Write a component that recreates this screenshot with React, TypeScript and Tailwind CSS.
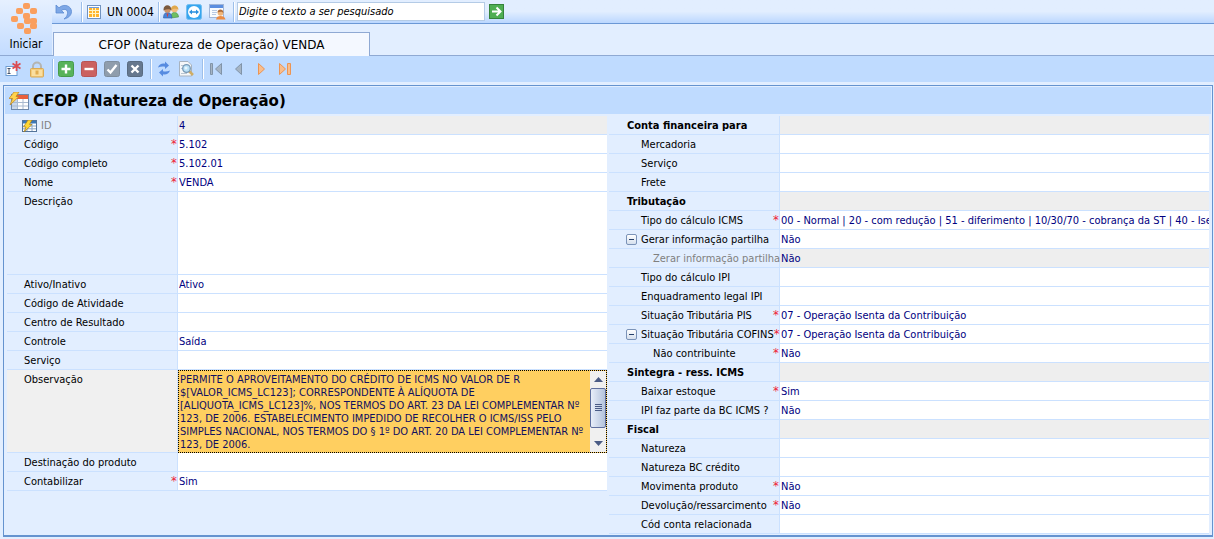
import React, { useState } from 'react'

interface Field {
  id: string
  label: string
  value?: string
  required?: boolean
  disabled?: boolean
  collapsible?: boolean
  level?: number
  kind?: 'section' | 'text' | 'memo' | 'note' | 'key'
}

const LEFT_FIELDS: Field[] = [
  { id: 'id', label: 'ID', value: '4', kind: 'key', disabled: true },
  { id: 'codigo', label: 'Código', value: '5.102', required: true },
  { id: 'codigo-completo', label: 'Código completo', value: '5.102.01', required: true },
  { id: 'nome', label: 'Nome', value: 'VENDA', required: true },
  { id: 'descricao', label: 'Descrição', kind: 'memo' },
  { id: 'ativo', label: 'Ativo/Inativo', value: 'Ativo' },
  { id: 'atividade', label: 'Código de Atividade' },
  { id: 'centro', label: 'Centro de Resultado' },
  { id: 'controle', label: 'Controle', value: 'Saída' },
  { id: 'servico', label: 'Serviço' },
  {
    id: 'observacao',
    label: 'Observação',
    kind: 'note',
    value: [
      'PERMITE O APROVEITAMENTO DO CRÉDITO DE ICMS NO VALOR DE R',
      '$[VALOR_ICMS_LC123]; CORRESPONDENTE À ALÍQUOTA DE',
      '[ALIQUOTA_ICMS_LC123]%, NOS TERMOS DO ART. 23 DA LEI COMPLEMENTAR Nº',
      '123, DE 2006. ESTABELECIMENTO IMPEDIDO DE RECOLHER O ICMS/ISS PELO',
      'SIMPLES NACIONAL, NOS TERMOS DO § 1º DO ART. 20 DA LEI COMPLEMENTAR Nº',
      '123, DE 2006.',
    ].join('\n'),
  },
  { id: 'destinacao', label: 'Destinação do produto' },
  { id: 'contabilizar', label: 'Contabilizar', value: 'Sim', required: true },
]

const RIGHT_FIELDS: Field[] = [
  { id: 'conta', label: 'Conta financeira para', kind: 'section' },
  { id: 'conta-mercadoria', label: 'Mercadoria' },
  { id: 'conta-servico', label: 'Serviço' },
  { id: 'conta-frete', label: 'Frete' },
  { id: 'tributacao', label: 'Tributação', kind: 'section' },
  {
    id: 'calculo-icms',
    label: 'Tipo do cálculo ICMS',
    value: '00 - Normal | 20 - com redução | 51 - diferimento | 10/30/70 - cobrança da ST | 40 - Isen',
    required: true,
  },
  { id: 'gerar-partilha', label: 'Gerar informação partilha', value: 'Não', collapsible: true },
  { id: 'zerar-partilha', label: 'Zerar informação partilha', value: 'Não', disabled: true, level: 2 },
  { id: 'calculo-ipi', label: 'Tipo do cálculo IPI' },
  { id: 'enquadramento-ipi', label: 'Enquadramento legal IPI' },
  { id: 'st-pis', label: 'Situação Tributária PIS', value: '07 - Operação Isenta da Contribuição', required: true },
  {
    id: 'st-cofins',
    label: 'Situação Tributária COFINS',
    value: '07 - Operação Isenta da Contribuição',
    required: true,
    collapsible: true,
  },
  { id: 'nao-contribuinte', label: 'Não contribuinte', value: 'Não', required: true, level: 2 },
  { id: 'sintegra', label: 'Sintegra - ress. ICMS', kind: 'section' },
  { id: 'baixar-estoque', label: 'Baixar estoque', value: 'Sim', required: true },
  { id: 'ipi-bc', label: 'IPI faz parte da BC ICMS ?', value: 'Não' },
  { id: 'fiscal', label: 'Fiscal', kind: 'section' },
  { id: 'natureza', label: 'Natureza' },
  { id: 'natureza-bc', label: 'Natureza BC crédito' },
  { id: 'movimenta', label: 'Movimenta produto', value: 'Não', required: true },
  { id: 'devolucao', label: 'Devolução/ressarcimento', value: 'Não', required: true },
  { id: 'conta-relacionada', label: 'Cód conta relacionada' },
]

/* ---------- icons ---------- */

function Logo() {
  const dots = [[18, 6], [11, 11], [25, 11], [18, 16], [6, 19], [25, 21], [12, 26], [19, 21], [25, 26], [19, 31]]
  return (
    <svg width="36" height="36" viewBox="0 0 36 36" aria-hidden="true">
      {dots.map(([x, y]) => (
        <rect key={`${x}-${y}`} x={x - 3} y={y - 3} width="7" height="6" rx="2" fill="#fa9f5e" />
      ))}
    </svg>
  )
}

function UndoIcon() {
  return (
    <svg width="18" height="18" viewBox="0 0 18 18" aria-hidden="true">
      <path d="M1 2v8h8L6.500 7.500C10 5 13 7 12.500 10.500c-.3 2.500-1.500 4-3.500 5.500 4-.8 7.500-3.500 7.500-7.500C16.500 3 9 0 4 4.800z" fill="#7da7e6" stroke="#5c8ad2" strokeWidth=".8" />
    </svg>
  )
}

function GridIcon() {
  return (
    <svg width="14" height="14" viewBox="0 0 14 14" aria-hidden="true">
      <rect x=".5" y=".5" width="13" height="13" fill="#fff" stroke="#7193c0" />
      <rect x="2" y="2" width="10" height="10" fill="#ffb52e" />
      <path d="M2 5.500h10M2 8.500h10M5.500 2v10M8.500 2v10" stroke="#fff4c8" />
      <path d="M2 2.500h10" stroke="#6d9be0" />
    </svg>
  )
}

function UsersIcon() {
  return (
    <svg width="16" height="16" viewBox="0 0 16 16" aria-hidden="true">
      <path d="M8 14c0-4 1-5.500 3.500-5.500s4 2 4 4.500z" fill="#6fbf62" stroke="#438c42" strokeWidth=".6" />
      <circle cx="11.500" cy="5" r="3.300" fill="#f3bd7c" />
      <path d="M8 6c0-6 7.500-6 7.500 0-2-2-5-1-7.500 0z" fill="#e0a94e" />
      <path d="M.5 14c0-4 1.500-5.500 4-5.500s4.500 2 4.500 5.500z" fill="#4684d8" stroke="#2e5da8" strokeWidth=".6" />
      <circle cx="4.500" cy="5.500" r="3.300" fill="#cf9467" />
      <path d="M.5 6.500c-.5-7 8-7 8 0-2-2-5-1.500-8 0z" fill="#79593f" />
      <path d="m3.500 9.500 1 4 1-4z" fill="#d93c35" />
    </svg>
  )
}

function RemoteIcon() {
  return (
    <svg width="16" height="16" viewBox="0 0 16 16" aria-hidden="true">
      <rect x=".5" y=".5" width="15" height="15" rx="2" fill="#37a6ef" stroke="#73bdf0" />
      <circle cx="8" cy="8" r="6" fill="#fff" />
      <path d="m3 8 3-2.500v1.700h4V5.500L13 8l-3 2.500V8.800H6v1.700z" fill="#2b91df" />
    </svg>
  )
}

function AgendaIcon() {
  return (
    <svg width="17" height="16" viewBox="0 0 17 16" aria-hidden="true">
      <rect x=".5" y=".5" width="14" height="13" fill="#f8fbff" stroke="#a1b6d8" />
      <path d="M1 1h13v3H1z" fill="#5b8ee0" />
      <path d="M3 6.500h5M3 8.500h5M3 10.500h4" stroke="#b7c9e4" />
      <circle cx="11.500" cy="9" r="2.800" fill="#f0b57a" />
      <path d="M8.500 8.500c0-4 6-4 6 .5-2-1.500-3-1.500-6-.5z" fill="#b06c38" />
      <path d="M7 15.500c.5-2.500 2-3.500 4.500-3.500s4.500 1 5 3.500z" fill="#eb8b44" />
    </svg>
  )
}

function GoIcon() {
  return (
    <svg width="15" height="15" viewBox="0 0 15 15" aria-hidden="true">
      <rect x=".5" y=".5" width="14" height="14" fill="#4fae52" stroke="#35833b" />
      <path d="M3 7.500h8M7.500 3.500l4 4-4 4" fill="none" stroke="#fff" strokeWidth="2" />
    </svg>
  )
}

function NewIcon() {
  return (
    <svg width="17" height="16" viewBox="0 0 17 16" aria-hidden="true">
      <rect x="1" y="5.500" width="11" height="9" fill="#fff" stroke="#6e9ed3" />
      <path d="M2.500 7.500h3M2.500 12.500h3M4 7.500v5" stroke="#45536b" />
      <path d="M11.500 0v10M7.500 2.500l8 5M15.500 2.500l-8 5" stroke="#dc4b51" strokeWidth="1.700" />
    </svg>
  )
}

function LockIcon() {
  return (
    <svg width="16" height="17" viewBox="0 0 16 17" aria-hidden="true">
      <path d="M4 9V5.500a4 4 0 0 1 8 0V9" fill="none" stroke="#b4b5b2" strokeWidth="2" />
      <rect x="1.500" y="7.500" width="13" height="8.500" rx="1" fill="#f5cd7e" stroke="#d9aa55" />
      <path d="M3 10h10M3 12h10M3 14h10" stroke="#fff0c2" />
      <rect x="6.500" y="9.500" width="3" height="4" fill="#e1ad52" />
    </svg>
  )
}

function BoxIcon({ fill, edge, d }: { fill: string; edge: string; d: string }) {
  return (
    <svg width="16" height="16" viewBox="0 0 16 16" aria-hidden="true">
      <rect x=".5" y=".5" width="15" height="15" rx="2" fill={fill} stroke={edge} />
      <path d={d} fill="none" stroke="#fff" strokeWidth="2.400" />
    </svg>
  )
}

function RefreshIcon() {
  return (
    <svg width="14" height="16" viewBox="0 0 14 16" aria-hidden="true">
      <path d="M1 6.500c1-3 4-4.500 7-3.700V.5L12 4.500 8 8V5.700c-2.500-.6-4.500-.2-7 .8z" fill="#568be0" />
      <path d="M13 9.500c-1 3-4 4.500-7 3.700v2.300l-4-4L6 8v2.300c2.500.6 4.500.2 7-.8z" fill="#568be0" />
    </svg>
  )
}

function PreviewIcon() {
  return (
    <svg width="17" height="16" viewBox="0 0 17 16" aria-hidden="true">
      <path d="M1.500.5H10l3.500 3.500v11h-12z" fill="#f5f7f9" stroke="#a8b3bf" />
      <path d="M3 4.500h4M3 7.500h2M3 12.500h6" stroke="#bac6d2" />
      <path d="m11 10 4 4" stroke="#cfad65" strokeWidth="2.500" />
      <circle cx="8.500" cy="7.500" r="3.800" fill="#b9e1f7" stroke="#7798b5" strokeWidth="1.300" />
      <circle cx="8" cy="7" r="1.500" fill="#e8f7ff" />
    </svg>
  )
}

const NAV_SHAPES = {
  first: 'M1.500 1.500h2v11h-2zM12.500 1.500v11l-6-5.500z',
  prev: 'M9.500 1.500v11L3.500 7z',
  next: 'M3.500 1.500v11l6-5.500z',
  last: 'M1.500 1.500v11l6-5.500zM9.500 1.500h3v11h-3z',
}

function NavIcon({ kind }: { kind: keyof typeof NAV_SHAPES }) {
  const back = kind === 'first' || kind === 'prev'
  return (
    <svg width="14" height="14" viewBox="0 0 14 14" aria-hidden="true">
      <path d={NAV_SHAPES[kind]} fill={back ? '#a5b4c4' : '#f8bd8c'} stroke={back ? '#8194a9' : '#ec9453'} />
    </svg>
  )
}

function TableIcon() {
  return (
    <svg width="20" height="18" viewBox="0 0 20 18" aria-hidden="true">
      <rect x="2.500" y="2.500" width="17" height="15" fill="#fff" stroke="#6f89ab" />
      <path d="M3 3h16v4H3z" fill="#e9603c" />
      <path d="M3 7h5v10H3z" fill="#c9d8eb" />
      <path d="M3 10.500h16M3 14h16M8.500 7v10M14 7v10" stroke="#a9bad0" />
      <path d="M5 0h5L7 4.500h3L1 13l2.500-6.500H0z" fill="#ffd34d" stroke="#bb8320" strokeWidth=".7" />
    </svg>
  )
}

function KeyIcon() {
  return (
    <svg width="15" height="12" viewBox="0 0 15 12" aria-hidden="true">
      <rect x=".5" y=".5" width="14" height="11" fill="#fff" stroke="#54749a" />
      <path d="M1 1h13v2.500H1z" fill="#3b78b8" />
      <path d="M1 6h13M1 8.800h13M5 3v8M10 3v8" stroke="#8aa6c6" />
      <path d="M6 0h4L7.500 4.500H10L2 12l2-5H1.500z" fill="#ffd733" stroke="#a37a1c" strokeWidth=".7" />
    </svg>
  )
}

/* ---------- building blocks ---------- */

function Separator({ className = '' }: { className?: string }) {
  return <span className={`h-5 w-0.5 shrink-0 border-l border-[#9dbfea] bg-white ${className}`} />
}

function ToolButton({ title, children }: { title: string; children: React.ReactNode }) {
  return (
    <button type="button" title={title} aria-label={title} className="flex h-[23px] w-[23px] shrink-0 items-center justify-center">
      {children}
    </button>
  )
}

function Scroller() {
  return (
    <div className="flex w-4 shrink-0 flex-col items-center justify-between bg-[#f0f0f0] py-0.5" aria-hidden="true">
      <svg width="9" height="13" viewBox="0 0 9 13"><path d="M0 9h9L4.500 4z" fill="#4a5b85" /></svg>
      <div className="mb-2 flex h-10 w-4 items-center justify-center rounded-xs border border-[#5f6f9e] bg-gradient-to-r from-[#e8eef9] to-[#b4c3dc]">
        <svg width="7" height="8" viewBox="0 0 7 8"><path d="M0 .5h7M0 2.500h7M0 4.500h7M0 6.500h7" stroke="#4a5b85" /></svg>
      </div>
      <svg width="9" height="13" viewBox="0 0 9 13"><path d="M0 4h9L4.500 9z" fill="#4a5b85" /></svg>
    </div>
  )
}

function getIndent({ kind, level, collapsible }: Field, side: 'left' | 'right') {
  if (side === 'left') return kind === 'key' ? 'pl-[15px]' : 'pl-[17px]'
  if (kind === 'section') return 'pl-[18px]'
  if (level === 2) return 'pl-11'
  return collapsible ? 'pl-[17px]' : 'pl-8'
}

function FieldRow({ field, side }: { field: Field; side: 'left' | 'right' }) {
  const [value, setValue] = useState(field.value ?? '')
  const { id, kind = 'text', label, required, disabled, collapsible } = field
  const tall = kind === 'memo' || kind === 'note'

  return (
    <div className={`flex ${tall ? 'h-[83px]' : 'h-[19px]'}`}>
      <div
        className={`flex w-[171px] shrink-0 items-start border-r border-b border-[#cbe1ff] ${getIndent(field, side)} ${kind === 'note' ? 'bg-[#f0f0f0]' : 'bg-[#e2eeff]'}`}
      >
        {kind === 'key' && <span className="mt-1 mr-1"><KeyIcon /></span>}
        {collapsible && (
          <button type="button" aria-label={`Recolher ${label}`} className="mt-1 mr-1 flex h-[11px] w-[11px] shrink-0 items-center justify-center rounded-xs border border-[#7b93b8] bg-gradient-to-b from-white to-[#d5dfed]">
            <span className="h-px w-[5px] bg-[#26406b]" />
          </button>
        )}
        {kind === 'section' ? (
          <h2 className="leading-5 font-bold whitespace-nowrap">{label}</h2>
        ) : (
          <label htmlFor={id} className={`flex-1 leading-5 whitespace-nowrap ${disabled ? 'text-[#808080]' : ''}`}>
            {label}
          </label>
        )}
        {required && <span className="w-1.5 shrink-0 text-[13px] leading-[18px] text-[#ee1c35]">*</span>}
      </div>

      {kind === 'section' && <div className="flex-1 border-b border-[#cbe1ff] bg-[#eee]" />}
      {kind === 'memo' && (
        <textarea id={id} value={value} onChange={e => setValue(e.target.value)} className="min-w-0 flex-1 resize-none border-b border-[#cbe1ff] bg-white px-0.5 text-[#000080] outline-none" />
      )}
      {kind === 'note' && (
        <div className="flex min-w-0 flex-1 border border-dotted border-black bg-[#ffcf60]">
          <textarea
            id={id}
            value={value}
            onChange={e => setValue(e.target.value)}
            className="min-w-0 flex-1 resize-none overflow-hidden pt-0.5 pl-px leading-[13px] whitespace-pre text-[#101060] outline-none"
          />
          <Scroller />
        </div>
      )}
      {(kind === 'text' || kind === 'key') && (
        <input
          id={id}
          type="text"
          value={value}
          readOnly={disabled}
          onChange={e => setValue(e.target.value)}
          className={`min-w-0 flex-1 border-b border-[#cbe1ff] pt-0.5 pl-px leading-4 text-[#000080] outline-none ${disabled ? 'bg-[#eee]' : 'bg-white'}`}
        />
      )}
    </div>
  )
}

export default function App() {
  const [search, setSearch] = useState('')

  return (
    <div className="min-h-screen bg-[#e2eeff] font-['DejaVu_Sans_Condensed','DejaVu_Sans',sans-serif] text-[11px] text-black">
      <header className="flex h-14">
        <button type="button" className="flex w-[52px] shrink-0 flex-col items-center border-b border-[#8fa9d3] bg-gradient-to-b from-[#e6f0ff] to-[#c3dcff]">
          <Logo />
          <span className="text-xs leading-4">Iniciar</span>
        </button>

        <div className="flex min-w-0 flex-1 flex-col">
          <div className="flex h-6 items-center border-b border-[#6b98d6] bg-gradient-to-b from-[#e2eeff] from-50% to-[#bbd7ff]">
            <ToolButton title="Desfazer"><UndoIcon /></ToolButton>
            <Separator className="ml-1.5" />
            <button type="button" className="flex items-center gap-1.5 px-1 text-xs whitespace-nowrap">
              <GridIcon />
              UN 0004
            </button>
            <Separator />
            <ToolButton title="Usuários"><UsersIcon /></ToolButton>
            <ToolButton title="Acesso remoto"><RemoteIcon /></ToolButton>
            <ToolButton title="Agenda"><AgendaIcon /></ToolButton>
            <Separator className="mr-0.5 ml-1" />
            <input
              type="text"
              aria-label="Pesquisar"
              placeholder="Digite o texto a ser pesquisado"
              value={search}
              onChange={e => setSearch(e.target.value)}
              className="h-[19px] w-[248px] border border-[#b4cbe6] bg-white pl-px italic outline-none placeholder:text-black"
            />
            <ToolButton title="Ir"><GoIcon /></ToolButton>
          </div>

          <nav className="flex flex-1 items-end">
            <span className="w-px self-stretch border-b border-[#8fa9d3]" />
            <a href="#cfop" className="flex h-6 w-[317px] items-center justify-center border-x border-t border-[#8fa9d3] bg-[#f4f8ff] font-['DejaVu_Sans',sans-serif] text-xs whitespace-nowrap">
              CFOP (Natureza de Operação) VENDA
            </a>
            <span className="flex-1 self-stretch border-b border-[#8fa9d3]" />
          </nav>
        </div>
      </header>

      <div className="flex h-[26px] items-center bg-[#bfdbff] pl-0.5">
        <ToolButton title="Novo"><NewIcon /></ToolButton>
        <ToolButton title="Bloquear"><LockIcon /></ToolButton>
        <Separator className="ml-1" />
        <ToolButton title="Incluir"><BoxIcon fill="#58b35a" edge="#479b4b" d="M8 3.500v9M3.500 8h9" /></ToolButton>
        <ToolButton title="Excluir"><BoxIcon fill="#cb6160" edge="#b85455" d="M3.500 8h9" /></ToolButton>
        <ToolButton title="Confirmar"><BoxIcon fill="#8f9dac" edge="#7e8d9d" d="m3.500 8.500 3 3 6-7.500" /></ToolButton>
        <ToolButton title="Cancelar"><BoxIcon fill="#66788e" edge="#596b80" d="m4.500 4.500 7 7m0-7-7 7" /></ToolButton>
        <Separator className="ml-1" />
        <ToolButton title="Atualizar"><RefreshIcon /></ToolButton>
        <ToolButton title="Visualizar"><PreviewIcon /></ToolButton>
        <Separator className="ml-1" />
        <ToolButton title="Primeiro"><NavIcon kind="first" /></ToolButton>
        <ToolButton title="Anterior"><NavIcon kind="prev" /></ToolButton>
        <ToolButton title="Próximo"><NavIcon kind="next" /></ToolButton>
        <ToolButton title="Último"><NavIcon kind="last" /></ToolButton>
      </div>

      <main className="mt-[3px] mr-px ml-[3px] border border-b-2 border-[#6593cf] p-px">
        <div className="flex h-[27px] items-center gap-1 bg-[#bfdbff] pl-1">
          <TableIcon />
          <h1 className="pt-0.5 font-['DejaVu_Sans',sans-serif] text-[15px] font-bold">CFOP (Natureza de Operação)</h1>
        </div>
        <form className="flex items-start gap-0.5 px-0.5 pt-0.5">
          <div className="min-w-0 flex-1">
            {LEFT_FIELDS.map(field => (
              <FieldRow key={field.id} field={field} side="left" />
            ))}
          </div>
          <div className="min-w-0 flex-1">
            {RIGHT_FIELDS.map(field => (
              <FieldRow key={field.id} field={field} side="right" />
            ))}
          </div>
        </form>
      </main>
    </div>
  )
}
